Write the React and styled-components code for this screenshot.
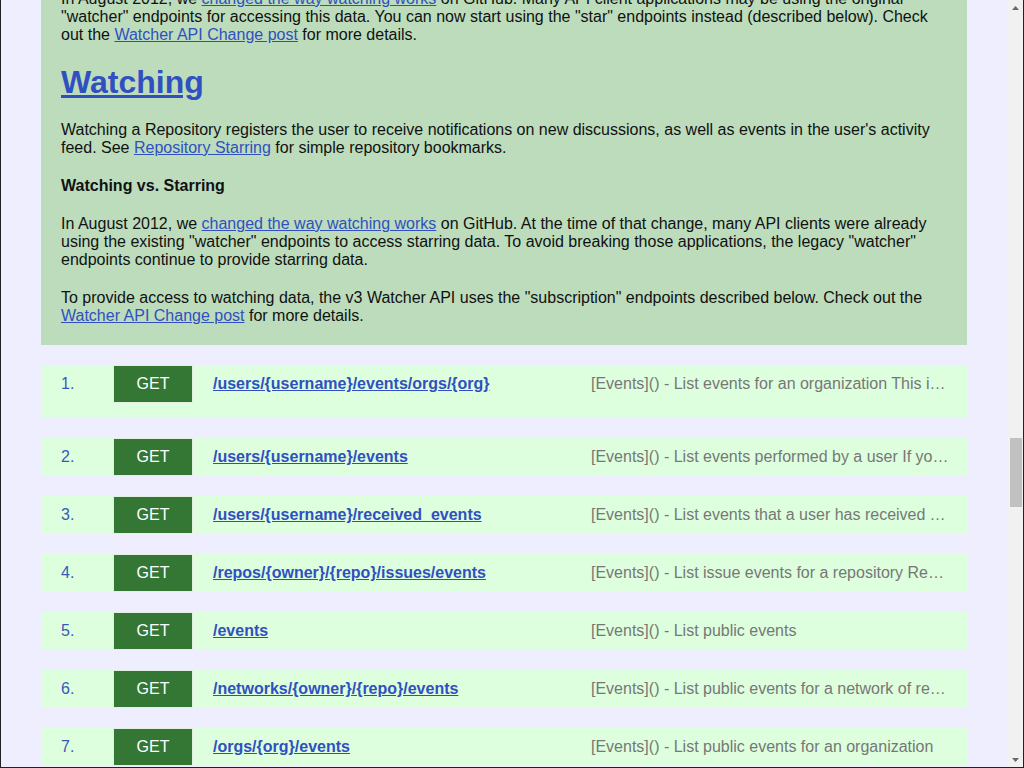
import React, { useLayoutEffect, useRef, useState } from 'react';
import styled, { createGlobalStyle } from 'styled-components';

const GlobalStyle = createGlobalStyle`
  html, body {
    margin: 0;
    height: 100%;
    overflow: hidden;
    background: #eeeeff;
  }
  body {
    font-family: "Liberation Sans", Arial, sans-serif;
    font-size: 16px;
    color: #111;
  }
`;

const Viewport = styled.div`
  display: flex;
  box-sizing: border-box;
  height: 100vh;
  border: 1px solid #222;
  border-top: none;
  background: #eeeeff;
`;

const Scroller = styled.div`
  flex: 1;
  min-width: 0;
  overflow-y: scroll;
  scrollbar-width: none;
  &::-webkit-scrollbar {
    display: none;
  }
`;

const ScrollBar = styled.div`
  display: flex;
  flex-direction: column;
  flex: none;
  width: 15px;
  background: #f1f1f1;
`;

const Arrow = styled.div`
  display: flex;
  align-items: center;
  justify-content: center;
  height: 15px;
  flex: none;
`;

const Track = styled.div`
  flex: 1;
  padding: 0 1px 0 2px;
`;

const Thumb = styled.div`
  background: #c1c1c1;
`;

const Page = styled.main`
  display: flex;
  flex-direction: column;
  gap: 20px;
  padding: 20px 41px 40px 40px;
`;

const Panel = styled.section`
  display: flow-root;
  padding: 0 20px;
  background: #bcdcbc;
`;

const Link = styled.a`
  color: #3050c0;
  text-decoration: underline;
  cursor: pointer;
`;

const Title = styled.h1`
  margin: 20px 0;
  font-size: 32px;
  line-height: 37px;
  font-weight: bold;
`;

const SubTitle = styled.h4`
  margin: 20px 0;
  font-size: 16px;
  line-height: 18px;
  font-weight: bold;
`;

const Text = styled.p`
  margin: 20px 0;
  line-height: 18px;
`;

const List = styled.ul`
  margin: 20px 0;
  padding-left: 28px;
  line-height: 18px;
`;

const Code = styled.pre`
  margin: 20px 0;
  padding: 10px 14px;
  background: #d3e8d3;
  font-family: "Liberation Mono", "Courier New", monospace;
  font-size: 14px;
  line-height: 18px;
  white-space: pre-wrap;
`;

const Table = styled.table`
  margin: 20px 0;
  border-collapse: collapse;
  width: 100%;
  line-height: 18px;

  th, td {
    border: 1px solid #9fc49f;
    padding: 6px 10px;
    text-align: left;
    vertical-align: top;
  }
  td:first-child {
    font-family: "Liberation Mono", "Courier New", monospace;
    white-space: nowrap;
  }
`;

const EndpointList = styled.ol`
  display: flex;
  flex-direction: column;
  gap: 20px;
  margin: 0;
  padding: 0;
  list-style: none;
`;

const Row = styled.li`
  display: grid;
  grid-template-columns: 32px 80px minmax(0, 1fr) minmax(0, 1fr);
  column-gap: 20px;
  align-items: start;
  padding: 0 18px ${p => (p.$tall ? '15px' : '0')} 20px;
  background: #ddffdd;
  line-height: 38px;
`;

const Num = styled.span`
  color: #3a58b8;
`;

const methodColors = {
  GET: '#347734',
  PUT: '#9a6420',
  PATCH: '#6a4c96',
  DELETE: '#a83434',
};

const Method = styled.span`
  display: block;
  box-sizing: border-box;
  height: 38px;
  border: 1px solid #e4efe4;
  background: ${p => methodColors[p.$method]};
  color: #fff;
  text-align: center;
  line-height: 36px;
`;

const Path = styled(Link)`
  font-weight: bold;
  white-space: nowrap;
  overflow: hidden;
  text-overflow: ellipsis;
`;

const Desc = styled.span`
  color: #777;
  white-space: nowrap;
  overflow: hidden;
  text-overflow: ellipsis;
`;

const endpoints = [
  ['GET', '/users/{username}/events/orgs/{org}', "[Events]() - List events for an organization This is the user's organization dashboard. You must be authenticated as the user to view this."],
  ['GET', '/users/{username}/events', "[Events]() - List events performed by a user If you are authenticated as the given user, you will see your private events. Otherwise, you'll only see public events."],
  ['GET', '/users/{username}/received_events', "[Events]() - List events that a user has received These are events that you've received by watching repos and following users."],
  ['GET', '/repos/{owner}/{repo}/issues/events', '[Events]() - List issue events for a repository Repository events and issue events are different.'],
  ['GET', '/events', '[Events]() - List public events'],
  ['GET', '/networks/{owner}/{repo}/events', '[Events]() - List public events for a network of repositories'],
  ['GET', '/orgs/{org}/events', '[Events]() - List public events for an organization'],
  ['GET', '/users/{username}/events/public', '[Events]() - List public events for a user'],
  ['GET', '/users/{username}/received_events/public', '[Events]() - List public events received by a user'],
  ['GET', '/repos/{owner}/{repo}/events', '[Events]() - List repository events'],
  ['GET', '/feeds', '[Feeds]() - Get feeds GitHub provides several timeline resources in Atom format.'],
  ['GET', '/notifications', '[Notifications]() - List notifications for the authenticated user List all notifications for the current user, sorted by most recently updated.'],
  ['PUT', '/notifications', '[Notifications]() - Mark notifications as read Marks all notifications as "read" for the current user.'],
  ['GET', '/notifications/threads/{thread_id}', '[Notifications]() - Get a thread'],
  ['PATCH', '/notifications/threads/{thread_id}', '[Notifications]() - Mark a thread as read'],
  ['GET', '/notifications/threads/{thread_id}/subscription', '[Notifications]() - Get a thread subscription for the authenticated user'],
  ['PUT', '/notifications/threads/{thread_id}/subscription', '[Notifications]() - Set a thread subscription'],
  ['DELETE', '/notifications/threads/{thread_id}/subscription', '[Notifications]() - Delete a thread subscription'],
  ['GET', '/repos/{owner}/{repo}/notifications', '[Notifications]() - List repository notifications for the authenticated user'],
  ['PUT', '/repos/{owner}/{repo}/notifications', '[Notifications]() - Mark repository notifications as read'],
  ['GET', '/repos/{owner}/{repo}/stargazers', '[Starring]() - List stargazers Lists the people that have starred the repository.'],
  ['GET', '/user/starred', '[Starring]() - List repositories starred by the authenticated user'],
  ['GET', '/user/starred/{owner}/{repo}', '[Starring]() - Check if a repository is starred by the authenticated user'],
  ['PUT', '/user/starred/{owner}/{repo}', '[Starring]() - Star a repository for the authenticated user'],
  ['DELETE', '/user/starred/{owner}/{repo}', '[Starring]() - Unstar a repository for the authenticated user'],
  ['GET', '/users/{username}/starred', '[Starring]() - List repositories starred by a user'],
  ['GET', '/repos/{owner}/{repo}/subscribers', '[Watching]() - List watchers Lists the people watching the specified repository.'],
  ['GET', '/repos/{owner}/{repo}/subscription', '[Watching]() - Get a repository subscription'],
  ['PUT', '/repos/{owner}/{repo}/subscription', '[Watching]() - Set a repository subscription'],
  ['DELETE', '/repos/{owner}/{repo}/subscription', '[Watching]() - Delete a repository subscription'],
  ['GET', '/user/subscriptions', '[Watching]() - List repositories watched by the authenticated user'],
  ['GET', '/users/{username}/subscriptions', '[Watching]() - List repositories watched by a user'],
  ['GET', '/repos/{owner}/{repo}/watchers', '[Watching]() - List watchers (legacy) Returns the users who have starred the repository.'],
  ['GET', '/user/subscriptions/{owner}/{repo}', '[Watching]() - Check if you are watching a repository (LEGACY)'],
  ['PUT', '/user/subscriptions/{owner}/{repo}', '[Watching]() - Watch a repository (LEGACY)'],
  ['DELETE', '/user/subscriptions/{owner}/{repo}', '[Watching]() - Stop watching a repository (LEGACY)'],
];

const eventTypes = [
  ['CommitCommentEvent', 'A commit comment is created.'],
  ['CreateEvent', 'A Git branch or tag is created.'],
  ['DeleteEvent', 'A Git branch or tag is deleted.'],
  ['ForkEvent', 'A user forks a repository.'],
  ['GollumEvent', 'A wiki page is created or updated.'],
  ['IssueCommentEvent', 'Activity related to an issue or pull request comment.'],
  ['IssuesEvent', 'Activity related to an issue.'],
  ['MemberEvent', 'Activity related to repository collaborators.'],
  ['PublicEvent', 'When a private repository is made public.'],
  ['PullRequestEvent', 'Activity related to pull requests.'],
  ['PullRequestReviewEvent', 'Activity related to pull request reviews.'],
  ['PullRequestReviewCommentEvent', "Activity related to pull request review comments in the pull request's unified diff."],
  ['PushEvent', 'One or more commits are pushed to a repository branch or tag.'],
  ['ReleaseEvent', 'Activity related to a release.'],
  ['SponsorshipEvent', 'Activity related to a sponsorship listing.'],
  ['WatchEvent', 'When someone stars a repository.'],
];

const reasons = [
  ['assign', 'You were assigned to the issue.'],
  ['author', 'You created the thread.'],
  ['comment', 'You commented on the thread.'],
  ['invitation', 'You accepted an invitation to contribute to the repository.'],
  ['manual', 'You subscribed to the thread (via an issue or pull request).'],
  ['mention', 'You were specifically @mentioned in the content.'],
  ['review_requested', "You, or a team you're a member of, were requested to review a pull request."],
  ['security_alert', 'GitHub discovered a security vulnerability in your repository.'],
  ['state_change', 'You changed the thread state (for example, closing an issue or merging a pull request).'],
  ['subscribed', "You're watching the repository."],
  ['team_mention', 'You were on a team that was mentioned.'],
];

const eventSample = `{
  "type": "Event",
  "public": true,
  "payload": {
  },
  "repo": {
    "id": 3,
    "name": "octocat/Hello-World",
    "url": "https://api.github.com/repos/octocat/Hello-World"
  },
  "actor": {
    "id": 1,
    "login": "octocat",
    "gravatar_id": "",
    "avatar_url": "https://github.com/images/error/octocat_happy.gif",
    "url": "https://api.github.com/users/octocat"
  },
  "org": {
    "id": 1,
    "login": "github",
    "gravatar_id": "",
    "url": "https://api.github.com/orgs/github",
    "avatar_url": "https://github.com/images/error/octocat_happy.gif"
  },
  "created_at": "2011-09-06T17:26:27Z",
  "id": "12345"
}`;

const feedSample = `{
  "timeline_url": "https://github.com/timeline",
  "user_url": "https://github.com/{user}",
  "current_user_public_url": "https://github.com/octocat",
  "current_user_url": "https://github.com/octocat.private?token=abc123",
  "current_user_actor_url": "https://github.com/octocat.private.actor?token=abc123",
  "current_user_organization_url": "",
  "current_user_organization_urls": [
    "https://github.com/organizations/github/octocat.private.atom?token=abc123"
  ],
  "security_advisories_url": "https://github.com/security-advisories",
  "_links": {
    "timeline": {
      "href": "https://github.com/timeline",
      "type": "application/atom+xml"
    },
    "user": {
      "href": "https://github.com/{user}",
      "type": "application/atom+xml"
    },
    "current_user_public": {
      "href": "https://github.com/octocat",
      "type": "application/atom+xml"
    },
    "security_advisories": {
      "href": "https://github.com/security-advisories",
      "type": "application/atom+xml"
    }
  }
}`;

const threadSample = `{
  "id": "1",
  "repository": {
    "id": 1296269,
    "name": "Hello-World",
    "full_name": "octocat/Hello-World",
    "owner": {
      "login": "octocat",
      "id": 1,
      "type": "User",
      "site_admin": false
    },
    "private": false,
    "html_url": "https://github.com/octocat/Hello-World",
    "description": "This your first repo!",
    "fork": false,
    "url": "https://api.github.com/repos/octocat/Hello-World"
  },
  "subject": {
    "title": "Greetings",
    "url": "https://api.github.com/repos/octokit/octokit.rb/issues/123",
    "latest_comment_url": "https://api.github.com/repos/octokit/octokit.rb/issues/comments/123",
    "type": "Issue"
  },
  "reason": "subscribed",
  "unread": true,
  "updated_at": "2014-11-07T22:01:45Z",
  "last_read_at": "2014-11-07T22:01:45Z",
  "url": "https://api.github.com/notifications/threads/1"
}`;

const starSample = `[
  {
    "starred_at": "2011-01-16T19:06:43Z",
    "repo": {
      "id": 1296269,
      "name": "Hello-World",
      "full_name": "octocat/Hello-World",
      "owner": {
        "login": "octocat",
        "id": 1
      },
      "private": false,
      "html_url": "https://github.com/octocat/Hello-World",
      "description": "This your first repo!",
      "stargazers_count": 80,
      "watchers_count": 80,
      "subscribers_count": 42
    }
  }
]`;

const pagingSample = `$ curl -I "https://api.github.com/users/octocat/starred?per_page=30&page=2"
> HTTP/1.1 200 OK
> Link: <https://api.github.com/user/583231/starred?per_page=30&page=3>; rel="next",
>       <https://api.github.com/user/583231/starred?per_page=30&page=5>; rel="last",
>       <https://api.github.com/user/583231/starred?per_page=30&page=1>; rel="first",
>       <https://api.github.com/user/583231/starred?per_page=30&page=1>; rel="prev"
> X-RateLimit-Limit: 60
> X-RateLimit-Remaining: 58`;

const ArrowIcon = ({ down }) => (
  <svg width="7" height="4" viewBox="0 0 7 4">
    <path d={down ? 'M0 0H7L3.5 4Z' : 'M0 4H7L3.5 0Z'} fill="#6b6b6b" />
  </svg>
);

export default function App() {
  const viewRef = useRef(null);
  const headRef = useRef(null);
  const [bar, setBar] = useState({ top: 0, size: 0 });

  useLayoutEffect(() => {
    const view = viewRef.current;
    const head = headRef.current;
    if (!view || !head) return;
    view.scrollTop =
      head.getBoundingClientRect().top - view.getBoundingClientRect().top - 64;
    const track = view.clientHeight - 30;
    setBar({
      top: (track * view.scrollTop) / view.scrollHeight,
      size: Math.max(20, (track * view.clientHeight) / view.scrollHeight),
    });
  }, []);

  return (
    <>
      <GlobalStyle />
      <Viewport>
        <Scroller ref={viewRef}>
          <Page>
            <Panel>
              <Title><Link>Events</Link></Title>
              <Text>
                This is a read-only API to the GitHub events. These events power the various activity
                streams on the site. An events API for repository issues is also available. For more
                information, see the <Link>Issue Events API</Link>.
              </Text>
              <Text>
                Events are optimized for polling with the "ETag" header. If no new events have been
                triggered, you will see a "304 Not Modified" response, and your current rate limit will
                be untouched. There is also an "X-Poll-Interval" header that specifies how often (in
                seconds) you are allowed to poll. In times of high server load, the time may increase.
                Please obey the header.
              </Text>
              <Code>{`$ curl -I https://api.github.com/users/tater/events
> HTTP/1.1 200 OK
> X-Poll-Interval: 60
> ETag: "a18c3bded88eb5dbb5c849a489412bf3"

# The quotes around the ETag value are important
$ curl -I https://api.github.com/users/tater/events \\
$    -H 'If-None-Match: "a18c3bded88eb5dbb5c849a489412bf3"'
> HTTP/1.1 304 Not Modified
> X-Poll-Interval: 60`}</Code>
              <Text>
                Events support pagination, however the per_page option is unsupported. The fixed page
                size is 30 items. Fetching up to ten pages is supported, for a total of 300 events.
              </Text>
              <Text>
                Only events created within the past 90 days will be included in timelines. Events older
                than 90 days will not be included (even if the total number of events in the timeline
                is less than 300).
              </Text>
              <Text>All Events have the same response format:</Text>
              <Code>{eventSample}</Code>
              <SubTitle>Event types</SubTitle>
              <Text>
                Each event object has a type property that tells you which activity triggered it. The
                payload object differs for each event type:
              </Text>
              <Table>
                <thead>
                  <tr><th>Event type</th><th>Triggered when</th></tr>
                </thead>
                <tbody>
                  {eventTypes.map(([name, text]) => (
                    <tr key={name}><td>{name}</td><td>{text}</td></tr>
                  ))}
                </tbody>
              </Table>

              <Title><Link>Feeds</Link></Title>
              <Text>
                GitHub provides several timeline resources in <Link>Atom</Link> format. The Feeds API
                lists all the feeds available to the authenticated user:
              </Text>
              <List>
                <li><b>Timeline:</b> The GitHub global public timeline</li>
                <li><b>User:</b> The public timeline for any user, using URI template</li>
                <li><b>Current user public:</b> The public timeline for the authenticated user</li>
                <li><b>Current user:</b> The private timeline for the authenticated user</li>
                <li><b>Current user actor:</b> The private timeline for activity created by the authenticated user</li>
                <li><b>Current user organizations:</b> The private timeline for the organizations the authenticated user is a member of.</li>
                <li><b>Security advisories:</b> A collection of public announcements that provide information about security-related vulnerabilities in software on GitHub.</li>
              </List>
              <Text>
                <b>Note:</b> Private feeds are only returned when authenticating via Basic Auth since
                current feed URIs use the older, non revocable auth tokens.
              </Text>
              <Code>{feedSample}</Code>

              <Title><Link>Notifications</Link></Title>
              <Text>Users receive notifications for conversations in repositories they watch including:</Text>
              <List>
                <li>Issues and their comments</li>
                <li>Pull Requests and their comments</li>
                <li>Comments on any commits</li>
              </List>
              <Text>
                Notifications are also sent for conversations in unwatched repositories when the user is
                involved including:
              </Text>
              <List>
                <li><b>@mentions</b></li>
                <li>Issue assignments</li>
                <li>Commits the user authors or commits</li>
                <li>Any discussion in which the user actively participates</li>
              </List>
              <Text>
                All Notification API calls require the notifications or repo API scopes. Doing this will
                give read-only access to some issue and commit content. You will still need the repo
                scope to access issues and commits from their respective endpoints.
              </Text>
              <Text>
                Notifications come back as "threads". A thread contains information about the current
                discussion of an issue, pull request, or commit.
              </Text>
              <Code>{threadSample}</Code>
              <Text>
                Notifications are optimized for polling with the Last-Modified header. If there are no
                new notifications, you will see a 304 Not Modified response, leaving your current rate
                limit untouched. There is an X-Poll-Interval header that specifies how often (in
                seconds) you are allowed to poll. In times of high server load, the time may increase.
                Please obey the header.
              </Text>
              <Code>{`# Add authentication to your requests
$ curl -I https://api.github.com/notifications
HTTP/1.1 200 OK
Last-Modified: Thu, 25 Oct 2012 15:16:27 GMT
X-Poll-Interval: 60

# Pass the Last-Modified header exactly
$ curl -I https://api.github.com/notifications
$    -H "If-Modified-Since: Thu, 25 Oct 2012 15:16:27 GMT"
> HTTP/1.1 304 Not Modified
> X-Poll-Interval: 60`}</Code>
              <SubTitle>Notification reasons</SubTitle>
              <Text>
                When retrieving responses from the Notifications API, each payload has a key titled
                reason. These correspond to events that trigger a notification. Here's a list of
                potential reasons for receiving a notification:
              </Text>
              <Table>
                <thead>
                  <tr><th>Reason Name</th><th>Description</th></tr>
                </thead>
                <tbody>
                  {reasons.map(([name, text]) => (
                    <tr key={name}><td>{name}</td><td>{text}</td></tr>
                  ))}
                </tbody>
              </Table>
              <Text>
                Note that the reason is modified on a per-thread basis, and can change, if the reason on
                a later notification is different. For example, if you are the author of an issue,
                subsequent notifications on that issue will have a reason of author. If you're then
                @mentioned on the same issue, the notifications you fetch thereafter will have a reason
                of mention. The reason remains as mention, regardless of whether you're ever mentioned
                again.
              </Text>

              <Title><Link>Starring</Link></Title>
              <Text>
                Repository Starring is a feature that lets users bookmark repositories. Stars are shown
                next to repositories to show an approximate level of interest. Stars have no effect on
                notifications or the activity feed. For that, see <Link>Repository Watching</Link>.
              </Text>
              <SubTitle>Starring vs. Watching</SubTitle>
              <Text>
                In August 2012, we <Link>changed the way watching works</Link> on GitHub. Many API
                client applications may be using the original "watcher" endpoints for accessing this
                data. You can now start using the "star" endpoints instead (described below). Check
                out the <Link>Watcher API Change post</Link> for more details.
              </Text>

              <Title ref={headRef}><Link>Watching</Link></Title>
              <Text>
                Watching a Repository registers the user to receive notifications on new discussions,
                as well as events in the user's activity feed. See <Link>Repository Starring</Link> for
                simple repository bookmarks.
              </Text>
              <SubTitle>Watching vs. Starring</SubTitle>
              <Text>
                In August 2012, we <Link>changed the way watching works</Link> on GitHub. At the time
                of that change, many API clients were already using the existing "watcher" endpoints to
                access starring data. To avoid breaking those applications, the legacy "watcher"
                endpoints continue to provide starring data.
              </Text>
              <Text>
                To provide access to watching data, the v3 Watcher API uses the "subscription"
                endpoints described below. Check out the <Link>Watcher API Change post</Link> for more
                details.
              </Text>
            </Panel>

            <EndpointList>
              {endpoints.map(([method, path, desc], i) => (
                <Row key={method + path} $tall={i === 0}>
                  <Num>{i + 1}.</Num>
                  <Method $method={method}>{method}</Method>
                  <Path>{path}</Path>
                  <Desc>{desc}</Desc>
                </Row>
              ))}
            </EndpointList>

            <Panel>
              <Title><Link>Custom media types for starring</Link></Title>
              <Text>
                There is one supported custom media type for the Starring REST API. When you use this
                custom media type, you will receive a response with the starred_at timestamp property
                that indicates the time the star was created. The response also has a second property
                that includes the resource that is returned when the custom media type is not
                included. The property that contains the resource will be either user or repo.
              </Text>
              <Code>application/vnd.github.v3.star+json</Code>
              <Text>
                For more information about media types, see <Link>Custom media types</Link>.
              </Text>
              <Code>{starSample}</Code>
              <Text>
                Lists of stargazers and starred repositories support pagination. Use the per_page and
                page parameters to walk through the results, and follow the Link header for the next
                and last pages.
              </Text>
              <Code>{pagingSample}</Code>
              <Text>
                Requests that are not authenticated share the low rate limit of the calling IP address.
                Authenticate with a token to raise the limit, and keep an eye on the X-RateLimit-Remaining
                header when you walk through long lists of stargazers or watched repositories.
              </Text>
            </Panel>
          </Page>
        </Scroller>
        <ScrollBar>
          <Arrow><ArrowIcon /></Arrow>
          <Track>
            <Thumb style={{ marginTop: bar.top, height: bar.size }} />
          </Track>
          <Arrow><ArrowIcon down /></Arrow>
        </ScrollBar>
      </Viewport>
    </>
  );
}
